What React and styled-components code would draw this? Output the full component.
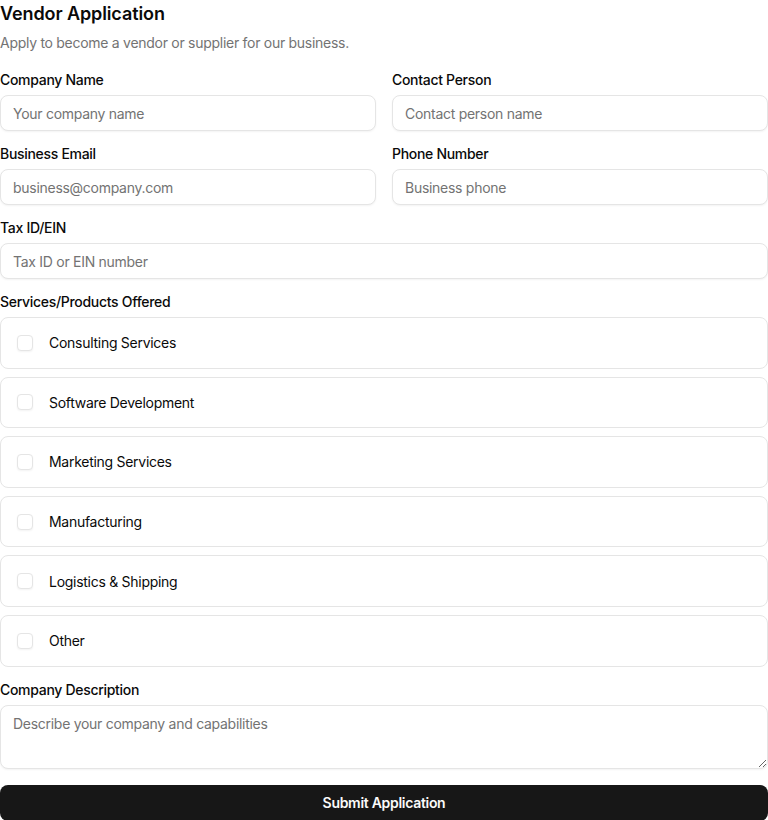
import React from "react";
import styled, { createGlobalStyle } from "styled-components";

const GlobalStyle = createGlobalStyle`
  * { box-sizing: border-box; }
  body {
    margin: 0;
    background: #ffffff;
    font-family: Inter, "Liberation Sans", sans-serif;
    color: #0a0a0a;
    -webkit-font-smoothing: antialiased;
  }
`;

const Form = styled.form`
  width: 768px;
  display: flex;
  flex-direction: column;
`;

const Header = styled.div`
  display: flex;
  flex-direction: column;
  gap: 5px;
  margin-bottom: 20px;
`;

const Title = styled.h2`
  margin: 0;
  font-size: 18px;
  line-height: 28px;
  font-weight: 600;
  letter-spacing: -0.1px;
`;

const Subtitle = styled.p`
  margin: 0;
  font-size: 14px;
  line-height: 20px;
  color: #737373;
  letter-spacing: -0.28px;
`;

const Fields = styled.div`
  display: flex;
  flex-direction: column;
  gap: 16px;
`;

const Row = styled.div`
  display: grid;
  grid-template-columns: 1fr 1fr;
  gap: 16px;
`;

const Field = styled.div`
  display: flex;
  flex-direction: column;
  gap: 8px;
`;

const Label = styled.label`
  font-size: 14px;
  line-height: 14px;
  font-weight: 500;
  letter-spacing: -0.3px;
`;

const Input = styled.input`
  height: 36px;
  width: 100%;
  border: 1px solid #e5e5e5;
  border-radius: 8px;
  padding: 4px 12px;
  font-family: inherit;
  font-size: 14px;
  letter-spacing: -0.28px;
  color: #0a0a0a;
  background: #fff;
  box-shadow: 0 1px 2px rgba(0, 0, 0, 0.05);
  outline: none;
  &::placeholder { color: #737373; }
`;

const TextArea = styled.textarea`
  height: 64px;
  width: 100%;
  border: 1px solid #e5e5e5;
  border-radius: 8px;
  padding: 8px 12px;
  font-family: inherit;
  font-size: 14px;
  line-height: 20px;
  letter-spacing: -0.28px;
  color: #0a0a0a;
  background: #fff;
  box-shadow: 0 1px 2px rgba(0, 0, 0, 0.05);
  outline: none;
  resize: vertical;
  display: block;
  &::placeholder { color: #737373; }
`;

const Options = styled.div`
  display: flex;
  flex-direction: column;
  gap: 8px;
`;

const OptionCard = styled.label`
  height: 51.6px;
  display: flex;
  align-items: center;
  gap: 16px;
  padding: 0 16px;
  border: 1px solid #e5e5e5;
  border-radius: 8px;
  font-size: 14px;
  font-weight: 400;
  letter-spacing: -0.28px;
  cursor: pointer;
`;

const Box = styled.span`
  width: 16px;
  height: 16px;
  flex-shrink: 0;
  border: 1px solid #e5e5e5;
  border-radius: 4px;
  box-shadow: 0 1px 2px rgba(0, 0, 0, 0.05);
  background: #fff;
`;

const SubmitButton = styled.button`
  height: 36px;
  width: 100%;
  border: none;
  border-radius: 8px;
  background: #171717;
  color: #fafafa;
  font-family: inherit;
  font-size: 14px;
  font-weight: 600;
  letter-spacing: -0.3px;
  cursor: pointer;
`;

const services = [
  "Consulting Services",
  "Software Development",
  "Marketing Services",
  "Manufacturing",
  "Logistics & Shipping",
  "Other",
];

export default function App() {
  return (
    <>
      <GlobalStyle />
      <Form onSubmit={(e) => e.preventDefault()}>
        <Header>
          <Title>Vendor Application</Title>
          <Subtitle>Apply to become a vendor or supplier for our business.</Subtitle>
        </Header>
        <Fields>
          <Row>
            <Field>
              <Label>Company Name</Label>
              <Input placeholder="Your company name" />
            </Field>
            <Field>
              <Label>Contact Person</Label>
              <Input placeholder="Contact person name" />
            </Field>
          </Row>
          <Row>
            <Field>
              <Label>Business Email</Label>
              <Input placeholder="business@company.com" />
            </Field>
            <Field>
              <Label>Phone Number</Label>
              <Input placeholder="Business phone" />
            </Field>
          </Row>
          <Field>
            <Label>Tax ID/EIN</Label>
            <Input placeholder="Tax ID or EIN number" />
          </Field>
          <Field>
            <Label>Services/Products Offered</Label>
            <Options>
              {services.map((s) => (
                <OptionCard key={s}>
                  <Box />
                  {s}
                </OptionCard>
              ))}
            </Options>
          </Field>
          <Field>
            <Label>Company Description</Label>
            <TextArea placeholder="Describe your company and capabilities" />
          </Field>
          <SubmitButton type="submit">Submit Application</SubmitButton>
        </Fields>
      </Form>
    </>
  );
}
